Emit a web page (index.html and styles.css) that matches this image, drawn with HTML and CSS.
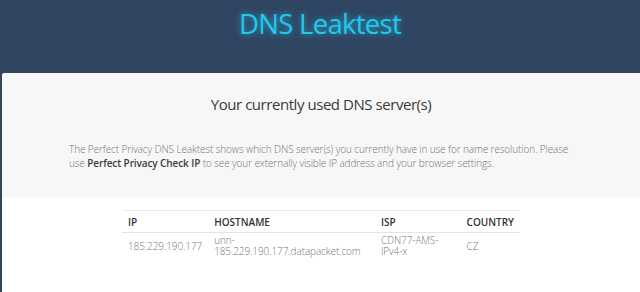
FILE: index.html
```html
<!DOCTYPE html>
<html lang="en">
<head>
    <meta charset="UTF-8">
    <title>DNS Leaktest</title>
    <link rel="stylesheet" href="styles.css">
</head>
<body>

<header class="page-header">
    <h1>DNS Leaktest</h1>
</header>

<div class="card">
    <div class="intro">
        <h2>Your currently used DNS server(s)</h2>
        <p>The Perfect Privacy DNS Leaktest shows which DNS server(s) you currently have in use for name resolution. Please
        use <a href="#">Perfect Privacy Check IP</a> to see your externally visible IP address and your browser settings.</p>
    </div>

    <div class="results">
        <table class="dns-table">
            <thead>
                <tr>
                    <th class="col-ip">IP</th>
                    <th class="col-host">HOSTNAME</th>
                    <th class="col-isp">ISP</th>
                    <th class="col-country">COUNTRY</th>
                </tr>
            </thead>
            <tbody>
                <tr>
                    <td>185.229.190.177</td>
                    <td>unn-185.229.190.177.datapacket.com</td>
                    <td>CDN77-AMS-IPv4-x</td>
                    <td>CZ</td>
                </tr>
            </tbody>
        </table>
    </div>
</div>

</body>
</html>
```

FILE: styles.css
```css
body {
    margin: 0;
    background-color: #2f4561;
    font-family: "Open Sans", Arial, sans-serif;
}

.page-header {
    height: 73px;
    text-align: center;
}

.page-header h1 {
    margin: 0;
    padding-top: 5px;
    font-size: 27.5px;
    font-weight: 400;
    letter-spacing: -0.7px;
    color: #22c8ee;
    text-shadow: 0 0 6px rgba(34, 200, 238, 0.8);
}

.card {
    margin-left: 2px;
    background-color: #ffffff;
    border-top-left-radius: 3px;
    min-height: 219px;
}

.intro {
    background-color: #f7f7f8;
    height: 124px;
    padding: 0 67px;
    box-sizing: border-box;
    border-top-left-radius: 3px;
}

.intro h2 {
    margin: 0;
    padding-top: 21px;
    text-align: center;
    font-size: 15px;
    font-weight: 400;
    letter-spacing: -0.45px;
    color: #3a3a3a;
}

.intro p {
    margin: 28px 0 0;
    font-size: 10px;
    line-height: 14px;
    letter-spacing: -0.1px;
    font-weight: 300;
    color: #747474;
}

.intro a {
    color: #3d3d3d;
    font-weight: 600;
    text-decoration: none;
}

.results {
    padding-top: 13px;
}

.dns-table {
    margin: 0 auto;
    width: 398px;
    border-collapse: collapse;
    font-size: 10px;
    text-align: left;
}

.dns-table th {
    padding: 4px 6px 3px;
    font-weight: 600;
    color: #333;
    border-top: 1px solid #ececec;
    border-bottom: 1px solid #e4e4e4;
}

.dns-table td {
    padding: 2px 6px 5px;
    line-height: 11px;
    font-weight: 300;
    letter-spacing: -0.1px;
    color: #777;
    vertical-align: middle;
}

.col-ip { width: 73px; }
.col-host { width: 155px; }
.col-isp { width: 75px; }
```
